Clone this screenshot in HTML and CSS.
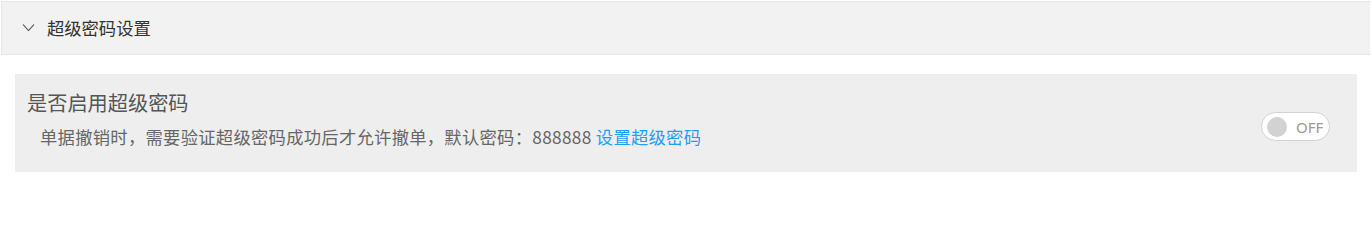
FILE: index.html
```html
<!DOCTYPE html>
<html lang="zh-CN">
<head>
<meta charset="utf-8">
<title>超级密码设置</title>
<link rel="stylesheet" href="styles.css">
</head>
<body>
<div class="colla">
  <div class="colla-title">
    <svg class="chev" width="13" height="9" viewBox="0 0 13 9"><polyline points="1,1.5 6.5,7.5 12,1.5" fill="none" stroke="#444" stroke-width="1.1"/></svg>
    <span class="colla-text">超级密码设置</span>
  </div>
  <div class="colla-content">
    <div class="card">
      <div class="card-text">
        <div class="card-title">是否启用超级密码</div>
        <div class="card-desc">单据撤销时，需要验证超级密码成功后才允许撤单，默认密码：888888 <a class="link">设置超级密码</a></div>
      </div>
      <div class="switch">
        <span class="knob"></span>
        <span class="switch-label">OFF</span>
      </div>
    </div>
  </div>
</div>
</body>
</html>
```
FILE: styles.css
```css
html, body {
  margin: 0;
  padding: 0;
  background: #fff;
}
body {
  font-family: "Noto Sans CJK SC", "Liberation Sans", sans-serif;
  padding: 1px 2px 0 1px;
}
.colla {
  width: 1369px;
}
.colla-title {
  height: 52px;
  background: #f2f2f2;
  border: 1px solid #e6e6e6;
  border-right: none;
  display: flex;
  align-items: center;
  padding-left: 20px;
  color: #333;
  font-size: 17.3px;
}
.chev {
  display: block;
  margin-right: 12px;
  margin-top: -1px;
}
.colla-text {
  line-height: 24px;
}
.colla-content {
  padding: 19px 13px 0 14px;
}
.card {
  background: #eeeeee;
  height: 98px;
  box-sizing: border-box;
  padding: 16px 27px 0 12px;
  display: flex;
  align-items: flex-start;
}
.card-text {
  flex: 1;
}
.card-title {
  font-size: 20.2px;
  line-height: 26px;
  color: #555;
}
.card-desc {
  margin-top: 9px;
  padding-left: 13px;
  font-size: 17.3px;
  line-height: 24px;
  letter-spacing: 0.3px;
  color: #666;
}
.link {
  color: #1e9fff;
  text-decoration: none;
}
.switch {
  margin-top: 22px;
  width: 69px;
  height: 29px;
  box-sizing: border-box;
  border: 1px solid #d2d2d2;
  border-radius: 15px;
  background: #fff;
  display: flex;
  align-items: center;
  padding-left: 5px;
}
.knob {
  width: 20px;
  height: 20px;
  border-radius: 50%;
  background: #d2d2d2;
}
.switch-label {
  margin-left: 9px;
  font-size: 15px;
  line-height: 20px;
  color: #999;
  font-family: "Noto Sans", "Liberation Sans", sans-serif;
}
```
